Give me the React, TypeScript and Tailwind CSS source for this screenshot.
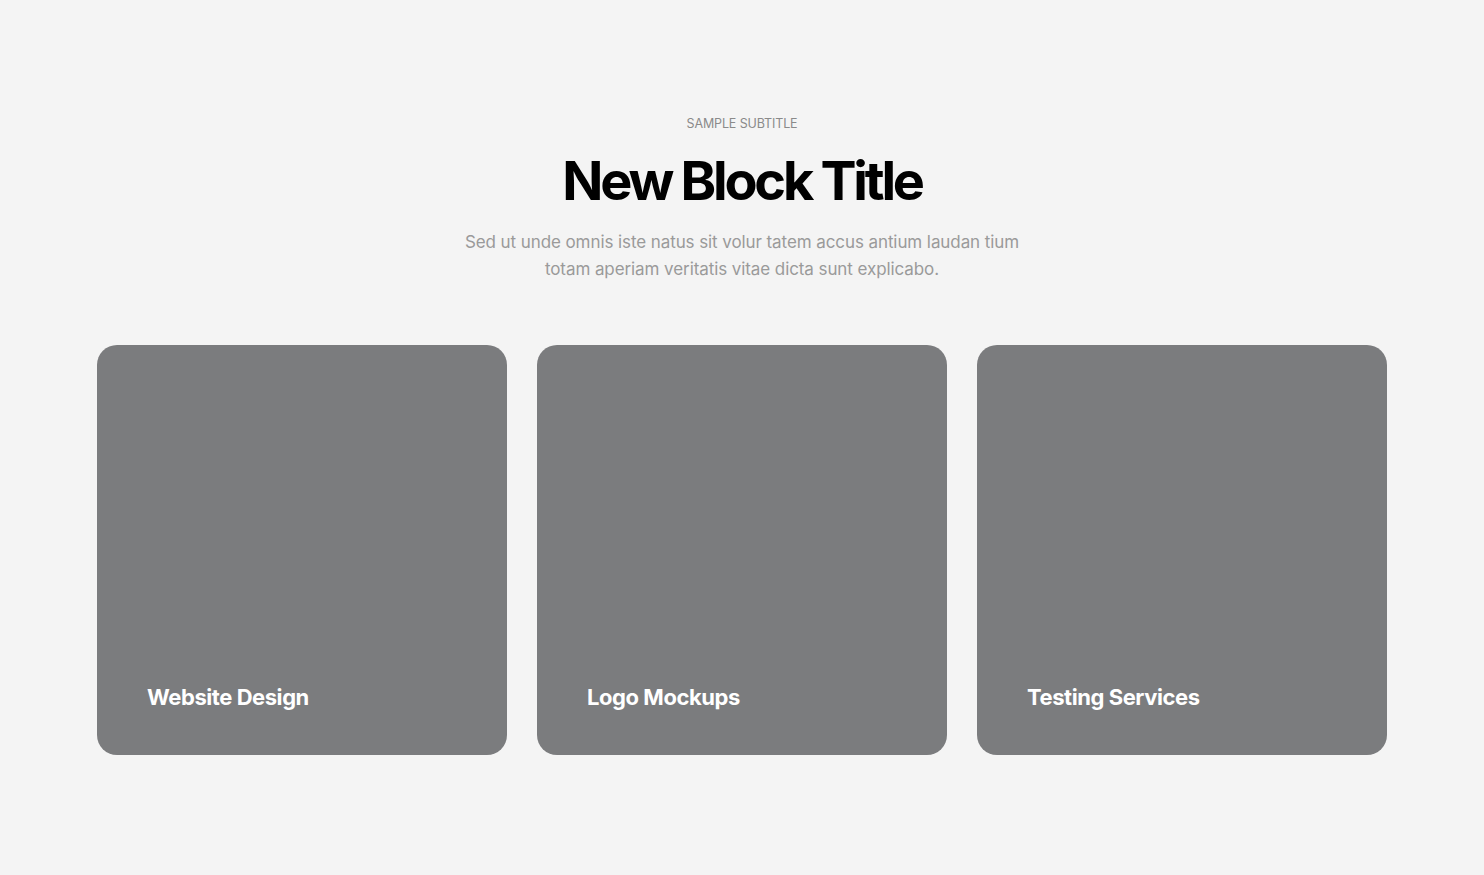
import React from "react";

const services = ["Website Design", "Logo Mockups", "Testing Services"];

const App: React.FC = () => {
  return (
    <main className="min-h-screen bg-[#f4f4f4] pt-[116px] pb-[120px] font-['Inter','Noto_Sans',sans-serif]">
      <section className="mx-auto flex max-w-[1290px] flex-col items-center">
        <p className="text-[12.5px] leading-4 uppercase tracking-[-0.01em] text-[#8a8a8a]">
          Sample Subtitle
        </p>
        <h2 className="mt-[19px] text-[54px] leading-[60px] font-bold tracking-[-0.06em] text-black">
          New Block Title
        </h2>
        <p className="mt-[18px] max-w-[575px] text-center text-[17px] leading-[27px] tracking-[-0.005em] text-[#9a9a9a]">
          Sed ut unde omnis iste natus sit volur tatem accus antium laudan tium
          totam aperiam veritatis vitae dicta sunt explicabo.
        </p>

        <div className="mt-[62px] grid w-full grid-cols-3 gap-[30px]">
          {services.map((title) => (
            <div
              key={title}
              className="flex h-[410px] flex-col justify-end rounded-[20px] bg-[#7b7c7e] px-[50px] pb-[44px]"
            >
              <h3 className="text-[22px] leading-7 font-bold tracking-[-0.02em] text-white">
                {title}
              </h3>
            </div>
          ))}
        </div>
      </section>
    </main>
  );
};

export default App;
